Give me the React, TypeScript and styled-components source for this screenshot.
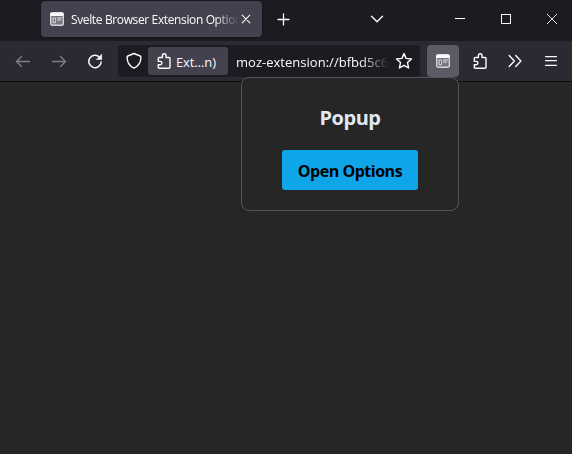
import React from "react";
import styled, { createGlobalStyle } from "styled-components";

const GlobalStyle = createGlobalStyle`
  * { box-sizing: border-box; }
  body { margin: 0; background: #262626; overflow: hidden; }
  button { border: 0; padding: 0; margin: 0; font: inherit; color: inherit; background: none; }
`;

const Window = styled.div`
  position: relative;
  width: 572px;
  height: 454px;
  display: flex;
  flex-direction: column;
  background: #262626;
  color: #fbfbfe;
  font-family: "Open Sans", "Noto Sans", sans-serif;
`;

const TitleBar = styled.header`
  display: flex;
  height: 41px;
  padding: 1px 0 4px 41px;
  background: #1c1b22;
`;

const Tab = styled.div`
  display: flex;
  align-items: center;
  width: 221px;
  height: 36px;
  padding: 0 9px;
  border-radius: 4px;
  background: #42414d;
  box-shadow: 0 0 3px rgba(0, 0, 0, 0.45);
`;

const FadingText = styled.span<{ $width: number; $size: number; $spacing: number; $fade: number }>`
  display: block;
  flex: none;
  width: ${(p) => p.$width}px;
  white-space: nowrap;
  font-size: ${(p) => p.$size}px;
  line-height: 20px;
  letter-spacing: ${(p) => p.$spacing}px;
  mask-image: linear-gradient(to left, transparent, #000 ${(p) => p.$fade}px);
`;

const TabTitle = styled(FadingText)`
  margin: 1px 0 0 7px;
`;

const IconButton = styled.button<{ $width: number; $active?: boolean; $dim?: boolean }>`
  display: flex;
  flex: none;
  align-items: center;
  justify-content: center;
  width: ${(p) => p.$width}px;
  height: 32px;
  border-radius: 4px;
  background: ${(p) => (p.$active ? "#5b5b66" : "transparent")};
  opacity: ${(p) => (p.$dim ? 0.4 : 1)};
`;

const TitleButton = styled(IconButton)`
  height: 36px;
`;

const Spacer = styled.div<{ $width: number }>`
  flex: none;
  width: ${(p) => p.$width}px;
`;

const Toolbar = styled.nav`
  display: flex;
  height: 41px;
  padding: 4px 0 0 5px;
  background: #2b2a33;
  border-bottom: 1px solid #0c0c0d;
`;

const AddressBar = styled.div`
  display: flex;
  align-items: center;
  width: 302px;
  height: 32px;
  margin-left: 5px;
  border-radius: 4px;
  background: #1c1b22;
`;

const Address = styled(FadingText)`
  margin-top: 2px;
`;

const Identity = styled.div`
  display: flex;
  align-items: center;
  width: 80px;
  height: 28px;
  margin-right: 8px;
  padding-left: 8px;
  gap: 4px;
  border-radius: 3px;
  background: #42414d;
  font-size: 13px;
  line-height: 20px;
  letter-spacing: -0.1px;
  white-space: nowrap;
`;

const IdentityLabel = styled.span`
  margin-top: 2px;
`;

const Popup = styled.section`
  position: absolute;
  left: 241px;
  top: 77px;
  display: flex;
  flex-direction: column;
  align-items: center;
  width: 218px;
  height: 134px;
  padding-top: 26px;
  border: 1px solid #52525e;
  border-radius: 8px;
  background: #262626;
`;

const Heading = styled.h1`
  margin: 0 0 18px;
  color: #e2e8f0;
  font-size: 20px;
  line-height: 28px;
  font-weight: 700;
  letter-spacing: -0.45px;
`;

const OptionsButton = styled.button`
  && {
    width: 136px;
    height: 40px;
    padding-top: 2px;
    border-radius: 3px;
    background: #0ea5e9;
    color: #000;
    font-size: 16px;
    font-weight: 700;
    letter-spacing: -0.48px;
    white-space: nowrap;
  }
`;

const Icon = styled.svg`
  display: block;
  flex: none;
  fill: none;
  stroke: currentColor;
  stroke-width: 1.4;
  stroke-linecap: round;
  stroke-linejoin: round;
`;

const CrispIcon = styled(Icon)`
  stroke-width: 1;
  shape-rendering: crispEdges;
  stroke-linecap: butt;
  stroke-linejoin: miter;
`;

const PageIcon = () => (
  <Icon width="14" height="14" viewBox="0 0 14 14">
    <rect x="0.7" y="0.7" width="12.6" height="12.6" rx="1.8" fill="#77767f" stroke="#d4d4da" />
    <path d="M1 1.2h12v2.3H1z" fill="#fbfbfe" stroke="#fbfbfe" strokeWidth="1" />
    <path d="M3.5 6h1.8v4.7H3.5z" fill="#45444e" stroke="#e6e6ea" strokeWidth="1" />
    <path d="M7.5 6h4M7.5 8h3" stroke="#e6e6ea" strokeWidth="1" />
  </Icon>
);

const PuzzleIcon = () => (
  <Icon width="16" height="18" viewBox="0 0 16 18">
    <path d="M2.3 8.2V6.5Q2.3 5.5 3.3 5.5H6.4V3.6a1.8 1.8 0 0 1 3.6 0v1.9h3q1 0 1 1v8.7q0 1-1 1H3.3q-1 0-1-1v-2.4h1.9a1.7 1.7 0 0 0 0-3.4H2.3z" />
  </Icon>
);

const BackIcon = () => (
  <Icon width="16" height="16" viewBox="0 0 16 16">
    <path d="M14.5 8.5h-13M6.5 3.5l-5 5 5 5" />
  </Icon>
);

const ForwardIcon = () => (
  <Icon width="16" height="16" viewBox="0 0 16 16">
    <path d="M1.5 8.5h13M9.5 3.5l5 5-5 5" />
  </Icon>
);

const ReloadIcon = () => (
  <Icon width="16" height="16" viewBox="0 0 16 16">
    <path d="M12.5 4.2A6.2 6.2 0 1 0 14.2 9" strokeWidth="1.5" />
    <path d="M14.6 1.7v4.7H9.9z" fill="currentColor" strokeWidth="0.7" />
  </Icon>
);

const ShieldIcon = () => (
  <Icon width="18" height="18" viewBox="0 0 18 18">
    <path d="M10 1.5 16.2 4q.7.3.7 1c0 5.3-2.4 9.2-6.9 11.2C5.5 14.2 3.1 10.3 3.1 5q0-.7.7-1z" />
  </Icon>
);

const StarIcon = () => (
  <Icon width="18" height="18" viewBox="0 0 18 18">
    <path d="M9 1.6 11.1 6.4 16.5 7 12.5 10.6 13.6 16 9 13.3 4.4 16 5.5 10.6 1.5 7 6.9 6.4z" />
  </Icon>
);

const TabCloseIcon = () => (
  <Icon width="10" height="10" viewBox="0 0 10 10">
    <path d="M1.2 1.2l7.6 7.6M8.8 1.2 1.2 8.8" strokeWidth="1.1" />
  </Icon>
);

const PlusIcon = () => (
  <Icon width="13" height="13" viewBox="0 0 13 13">
    <path d="M6.5 1v11M1 6.5h11" strokeWidth="1.3" />
  </Icon>
);

const ChevronIcon = () => (
  <Icon width="14" height="8" viewBox="0 0 14 8">
    <path d="M1.5 1.2 7 6.7l5.5-5.5" />
  </Icon>
);

const MinimizeIcon = () => (
  <CrispIcon width="10" height="10" viewBox="0 0 10 10">
    <path d="M0 4.5h10" />
  </CrispIcon>
);

const MaximizeIcon = () => (
  <CrispIcon width="10" height="10" viewBox="0 0 10 10">
    <path d="M.5.5h9v9h-9z" />
  </CrispIcon>
);

const WindowCloseIcon = () => (
  <Icon width="10" height="10" viewBox="0 0 10 10">
    <path d="M.2.2l9.6 9.6M9.8.2.2 9.8" strokeWidth="0.9" />
  </Icon>
);

const OverflowIcon = () => (
  <Icon width="14" height="14" viewBox="0 0 14 14">
    <path d="M1.2 1.5 6.4 7l-5.2 5.5M7.7 1.5 12.9 7l-5.2 5.5" />
  </Icon>
);

const MenuIcon = () => (
  <Icon width="12" height="12" viewBox="0 0 12 12">
    <path d="M.6 1.6h10.8M.6 5.6h10.8M.6 10.4h10.8" />
  </Icon>
);

export default function App() {
  return (
    <>
      <GlobalStyle />
      <Window>
        <TitleBar>
          <Tab>
            <PageIcon />
            <TabTitle $width={168} $size={12} $spacing={-0.37} $fade={24}>
              Svelte Browser Extension Option
            </TabTitle>
            <TitleButton $width={14} aria-label="Close tab"><TabCloseIcon /></TitleButton>
          </Tab>
          <Spacer $width={6} />
          <TitleButton $width={31} aria-label="New tab"><PlusIcon /></TitleButton>
          <Spacer $width={62} />
          <TitleButton $width={32} aria-label="List tabs"><ChevronIcon /></TitleButton>
          <Spacer $width={44} />
          <TitleButton $width={46} aria-label="Minimize"><MinimizeIcon /></TitleButton>
          <TitleButton $width={46} aria-label="Maximize"><MaximizeIcon /></TitleButton>
          <TitleButton $width={46} aria-label="Close"><WindowCloseIcon /></TitleButton>
        </TitleBar>
        <Toolbar>
          <IconButton $width={36} $dim aria-label="Back"><BackIcon /></IconButton>
          <IconButton $width={36} $dim aria-label="Forward"><ForwardIcon /></IconButton>
          <IconButton $width={36} aria-label="Reload"><ReloadIcon /></IconButton>
          <AddressBar>
            <IconButton $width={30} aria-label="Protection"><ShieldIcon /></IconButton>
            <Identity>
              <PuzzleIcon />
              <IdentityLabel>Ext…n)</IdentityLabel>
            </Identity>
            <Address $width={153} $size={13} $spacing={0.02} $fade={28}>
              moz-extension://bfbd5c6
            </Address>
            <IconButton $width={30} aria-label="Bookmark"><StarIcon /></IconButton>
          </AddressBar>
          <Spacer $width={7} />
          <IconButton $width={32} $active aria-label="Open popup"><PageIcon /></IconButton>
          <Spacer $width={5} />
          <IconButton $width={32} aria-label="Extensions"><PuzzleIcon /></IconButton>
          <Spacer $width={3} />
          <IconButton $width={32} aria-label="More tools"><OverflowIcon /></IconButton>
          <Spacer $width={4} />
          <IconButton $width={32} aria-label="Menu"><MenuIcon /></IconButton>
        </Toolbar>
        <Popup>
          <Heading>Popup</Heading>
          <OptionsButton>Open Options</OptionsButton>
        </Popup>
      </Window>
    </>
  );
}
